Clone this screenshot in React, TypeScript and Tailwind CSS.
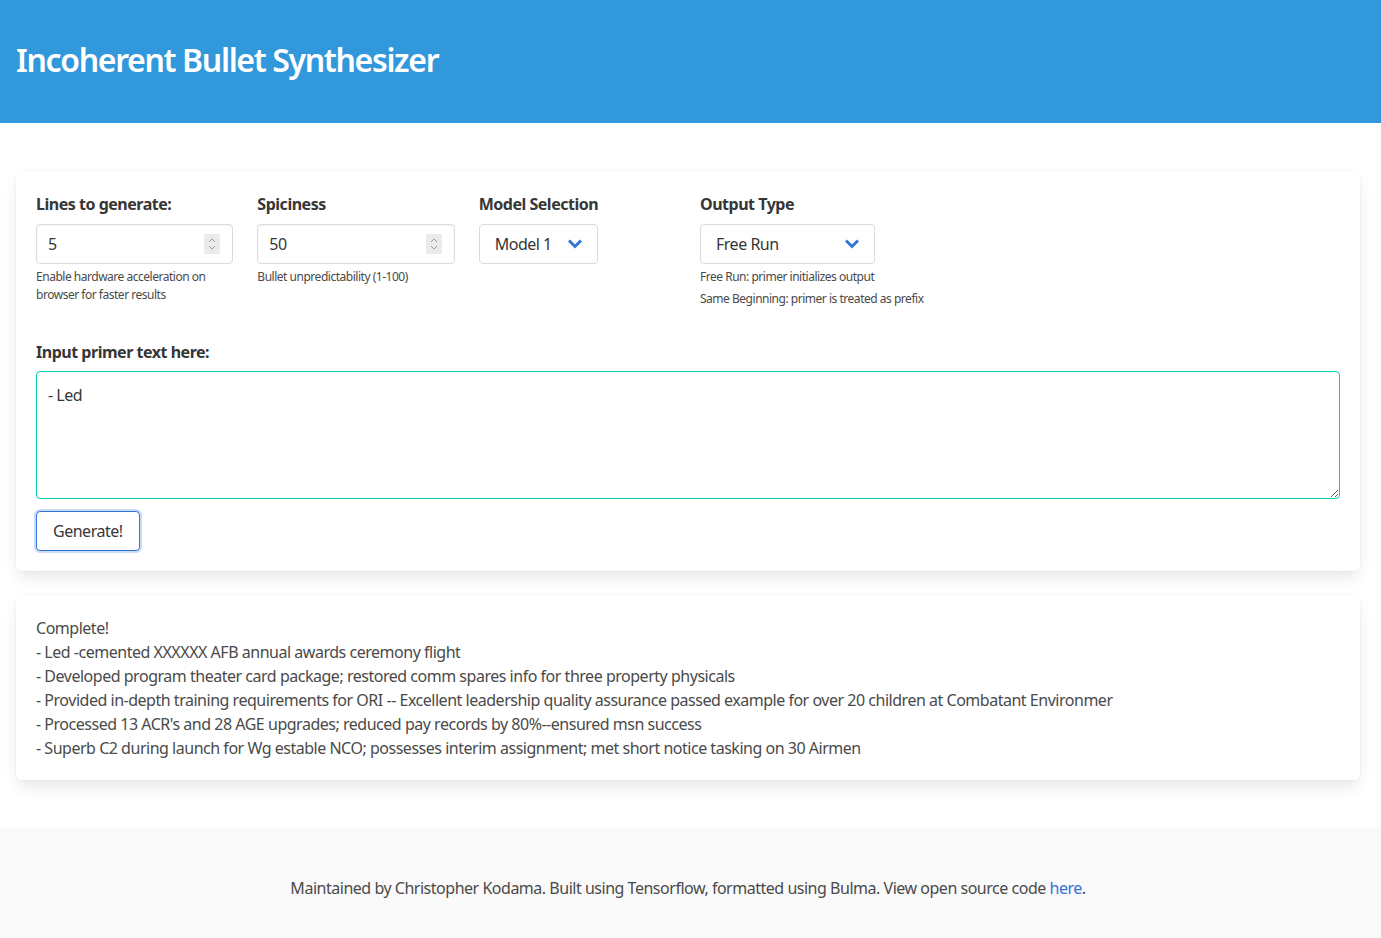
import React from 'react';

const font = "font-['Noto_Sans','Open_Sans',sans-serif] tracking-[-0.03em]";

function Spinner() {
  return (
    <div className="absolute right-[13px] top-[10px] flex h-[20px] w-[16px] items-center justify-center bg-[#ebebed]">
      <svg width="8" height="14" viewBox="0 0 8 14" fill="none">
        <path d="M1 5 L4 2 L7 5" stroke="#9d9d9d" strokeWidth="1" />
        <path d="M1 9 L4 12 L7 9" stroke="#9d9d9d" strokeWidth="1" />
      </svg>
    </div>
  );
}

function Chevron() {
  return (
    <svg width="14" height="10" viewBox="0 0 14 10" fill="none">
      <path d="M2 2.5 L7 7.5 L12 2.5" stroke="#3273dc" strokeWidth="3" strokeLinecap="square" />
    </svg>
  );
}

function NumberField({ label, value, help }: { label: string; value: string; help: string }) {
  return (
    <div className="flex flex-col">
      <label className="mb-2 text-base font-bold leading-6 text-[#363636]">{label}</label>
      <div className="relative">
        <input
          type="text"
          defaultValue={value}
          className="h-10 w-full rounded border border-[#dbdbdb] bg-white px-[11px] text-base text-[#363636] shadow-[inset_0_1px_2px_rgba(10,10,10,0.05)] outline-none"
        />
        <Spinner />
      </div>
      <p className="mt-1 text-xs leading-[18px] text-[#4a4a4a]">{help}</p>
    </div>
  );
}

function SelectField({ label, value, width, help }: { label: string; value: string; width: string; help?: string[] }) {
  return (
    <div className="flex flex-col">
      <label className="mb-2 text-base font-bold leading-6 text-[#363636]">{label}</label>
      <div className={`flex h-10 items-center justify-between rounded border border-[#dbdbdb] bg-white pl-[15px] pr-[15px] text-base text-[#363636] ${width}`}>
        <span>{value}</span>
        <Chevron />
      </div>
      {help?.map((h) => (
        <p key={h} className="mt-1 whitespace-nowrap text-xs leading-[18px] text-[#4a4a4a]">{h}</p>
      ))}
    </div>
  );
}

const output = [
  'Complete!',
  '- Led -cemented XXXXXX AFB annual awards ceremony flight',
  '- Developed program theater card package; restored comm spares info for three property physicals',
  '- Provided in-depth training requirements for ORI -- Excellent leadership quality assurance passed example for over 20 children at Combatant Environmer',
  "- Processed 13 ACR's and 28 AGE upgrades; reduced pay records by 80%--ensured msn success",
  '- Superb C2 during launch for Wg estable NCO; possesses interim assignment; met short notice tasking on 30 Airmen',
];

const boxShadow = 'shadow-[0_8px_16px_-2px_rgba(10,10,10,0.1),0_0_0_1px_rgba(10,10,10,0.02)]';

export default function App() {
  return (
    <div className={`min-h-screen bg-white ${font} text-[#4a4a4a]`}>
      {/* Hero */}
      <header className="flex h-[123px] items-center bg-[#3298dc] px-4 pb-1">
        <h1 className="text-[32px] font-semibold leading-9 tracking-[-0.042em] text-white">Incoherent Bullet Synthesizer</h1>
      </header>

      {/* Main section */}
      <main className="py-12 pl-4 pr-[21px]">
        <div className={`rounded-md bg-white px-5 pb-5 pt-[21px] ${boxShadow}`}>
          <div className="grid grid-cols-6 gap-x-6">
            <NumberField label="Lines to generate:" value="5" help="Enable hardware acceleration on browser for faster results" />
            <NumberField label="Spiciness" value="50" help="Bullet unpredictability (1-100)" />
            <SelectField label="Model Selection" value="Model 1" width="w-[119px]" />
            <SelectField
              label="Output Type"
              value="Free Run"
              width="w-[175px]"
              help={['Free Run: primer initializes output', 'Same Beginning: primer is treated as prefix']}
            />
          </div>

          <div className="mt-8 flex flex-col">
            <label className="mb-[7px] text-base font-bold leading-6 text-[#363636]">Input primer text here:</label>
            <textarea
              defaultValue="- Led"
              className="h-32 w-full rounded border border-[#00d1b2] p-[11px] text-base leading-6 text-[#363636] outline-none"
            />
          </div>

          <button className="mt-3 h-10 rounded border border-[#3273dc] bg-white px-4 text-base text-[#363636] shadow-[0_0_0_2px_rgba(50,115,220,0.25)]">
            Generate!
          </button>
        </div>

        <div className={`mt-6 rounded-md bg-white px-5 pb-5 pt-[21px] ${boxShadow}`}>
          {output.map((line) => (
            <p key={line} className="text-base leading-6 text-[#4a4a4a]">{line}</p>
          ))}
        </div>
      </main>

      <footer className="bg-[#fafafa] pb-24 pl-6 pr-[29px] pt-12 text-center text-base leading-6 text-[#4a4a4a]">
        Maintained by Christopher Kodama. Built using Tensorflow, formatted using Bulma. View open source code{' '}
        <a href="#" className="text-[#3273dc]">here</a>.
      </footer>
    </div>
  );
}
